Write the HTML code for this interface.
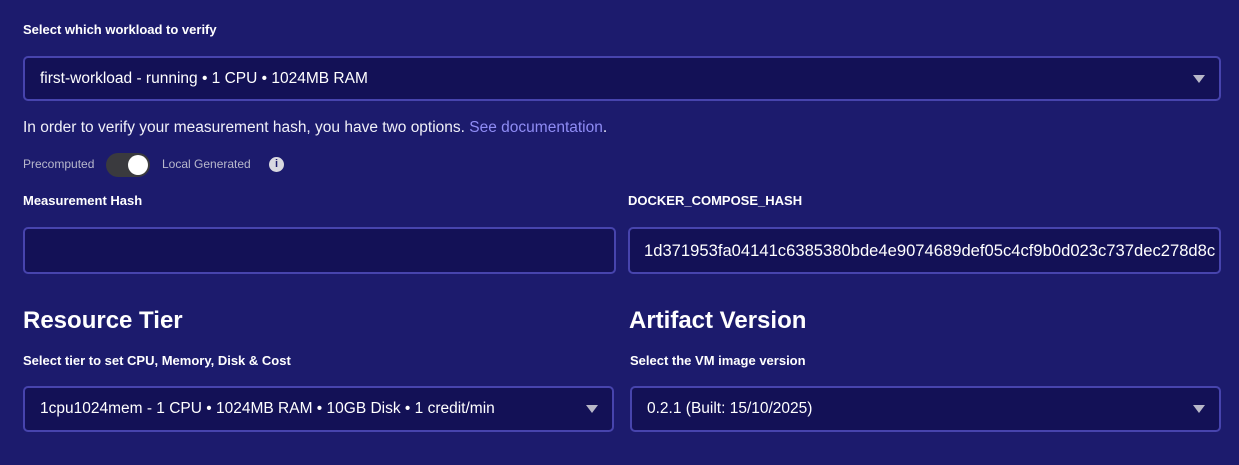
<!DOCTYPE html>
<html><head><style>
*{box-sizing:border-box;margin:0;padding:0}
body{width:1239px;height:465px;background:#1c1b6d;font-family:"Liberation Sans",sans-serif;color:#fff;position:relative;overflow:hidden}
.a{position:absolute}
.lbl{font-size:13px;font-weight:bold;color:#fff}
.box{position:absolute;background:#131156;border:2px solid #4744ad;border-radius:5px;font-size:15.5px;color:#fff;padding-left:15px;display:flex;align-items:center}
.arr{position:absolute;right:14px;top:50%;margin-top:-4px;width:0;height:0;border-left:6px solid transparent;border-right:6px solid transparent;border-top:8px solid #b8b8c8}
h2{position:absolute;font-size:24px;font-weight:bold;color:#fff}
</style></head><body>
<div class="a lbl" style="left:23px;top:22px">Select which workload to verify</div>
<div class="box" style="left:23px;top:56px;width:1198px;height:45px">first-workload - running • 1 CPU • 1024MB RAM<div class="arr"></div></div>
<div class="a" style="left:23px;top:119px;font-size:15.5px;color:#f0f0f8">In order to verify your measurement hash, you have two options. <span style="color:#8f8cf5">See documentation</span>.</div>
<div class="a" style="left:23px;top:157px;font-size:12px;color:#b8b8cc">Precomputed</div>
<div class="a" style="left:106px;top:153px;width:44px;height:24px;border-radius:12px;background:#3a3a3e"></div>
<div class="a" style="left:128px;top:155px;width:20px;height:20px;border-radius:50%;background:#fff"></div>
<div class="a" style="left:162px;top:157px;font-size:12px;color:#b8b8cc">Local Generated</div>
<div class="a" style="left:269px;top:157px;width:15px;height:15px;border-radius:50%;background:#d8d8e0;color:#1c1b6d;font-size:11px;font-weight:bold;text-align:center;line-height:15px">i</div>
<div class="a lbl" style="left:23px;top:193px">Measurement Hash</div>
<div class="a lbl" style="left:628px;top:193px">DOCKER_COMPOSE_HASH</div>
<div class="box" style="left:23px;top:227px;width:593px;height:47px"></div>
<div class="box" style="left:628px;top:227px;width:593px;height:47px;padding-left:14px;font-size:16.6px;white-space:nowrap;overflow:hidden">1d371953fa04141c6385380bde4e9074689def05c4cf9b0d023c737dec278d8c</div>
<h2 style="left:23px;top:307px">Resource Tier</h2>
<h2 style="left:629px;top:307px">Artifact Version</h2>
<div class="a lbl" style="left:23px;top:353px">Select tier to set CPU, Memory, Disk &amp; Cost</div>
<div class="a lbl" style="left:630px;top:353px">Select the VM image version</div>
<div class="box" style="left:23px;top:386px;width:591px;height:46px">1cpu1024mem - 1 CPU • 1024MB RAM • 10GB Disk • 1 credit/min<div class="arr"></div></div>
<div class="box" style="left:630px;top:386px;width:591px;height:46px">0.2.1 (Built: 15/10/2025)<div class="arr"></div></div>
</body></html>
